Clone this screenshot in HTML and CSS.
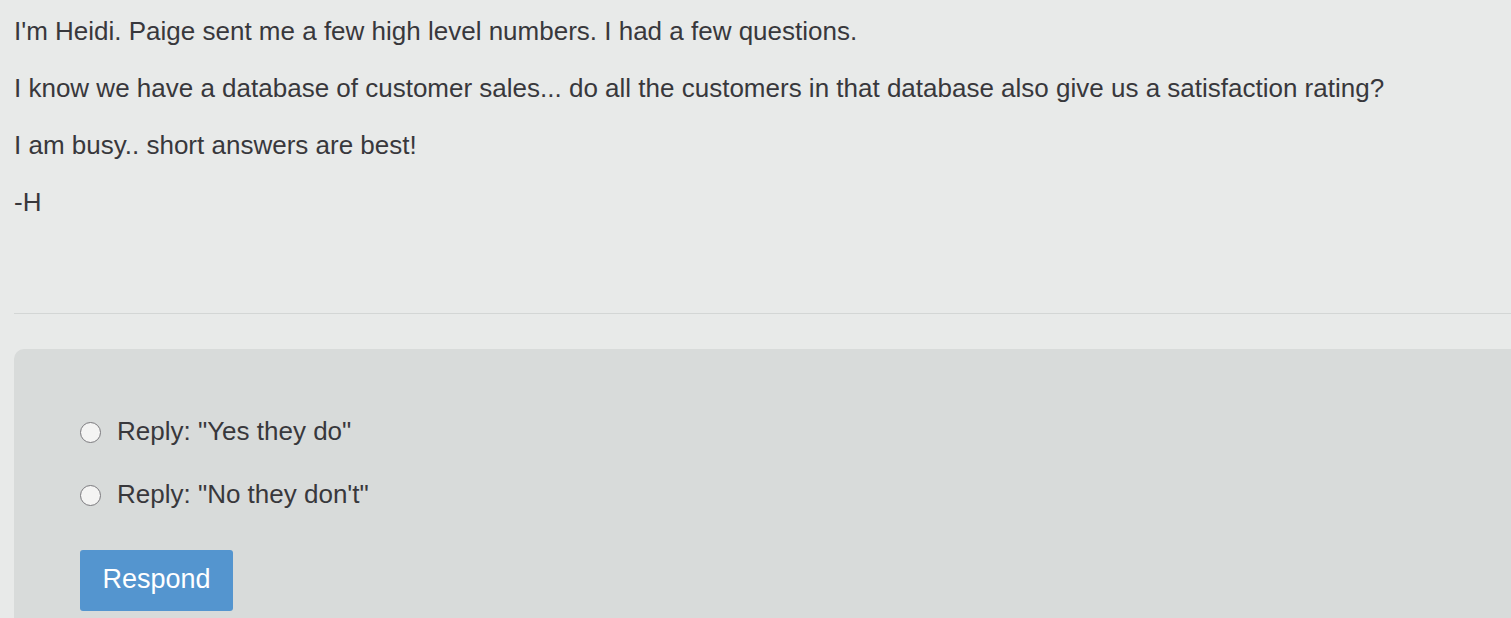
FILE: index.html
```html
<!DOCTYPE html>
<html>
<head>
<meta charset="utf-8">
<link rel="stylesheet" href="styles.css">
</head>
<body>
<div class="message">
  <p>I'm Heidi. Paige sent me a few high level numbers. I had a few questions.</p>
  <p>I know we have a database of customer sales... do all the customers in that database also give us a satisfaction rating?</p>
  <p>I am busy.. short answers are best!</p>
  <p>-H</p>
</div>
<hr class="divider">
<form class="panel">
  <label class="option"><span class="radio"></span><span>Reply: "Yes they do"</span></label>
  <label class="option"><span class="radio"></span><span>Reply: "No they don't"</span></label>
  <button type="button" class="respond">Respond</button>
</form>
</body>
</html>
```
FILE: styles.css
```css
html {
  margin: 0;
  height: 100%;
  background: #e8eae9;
}
body {
  margin: 0;
  height: 100%;
  box-sizing: border-box;
  padding-left: 14px;
  display: flex;
  flex-direction: column;
  overflow: hidden;
  font-family: "Liberation Sans", Arial, sans-serif;
  color: #38383c;
}
.message {
  flex-shrink: 0;
  padding-top: 17px;
}
.message p {
  margin: 0 0 28px 0;
  font-size: 26px;
  line-height: 29px;
}
.divider {
  flex-shrink: 0;
  width: 100%;
  border: 0;
  border-top: 1px solid #d3d6d5;
  margin: 68px 0 0 0;
}
.panel {
  flex: 1;
  margin: 35px 0 0 0;
  background: #d8dbda;
  border-top-left-radius: 10px;
  padding: 67px 0 0 66px;
  display: flex;
  flex-direction: column;
  align-items: flex-start;
}
.option {
  display: flex;
  align-items: center;
  gap: 16px;
  font-size: 26px;
  line-height: 30px;
  margin-bottom: 33px;
}
.radio {
  width: 21px;
  height: 21px;
  border: 1.5px solid #7b7a7e;
  border-radius: 50%;
  background: #f4f4f3;
  box-sizing: border-box;
  margin-top: 2px;
}
.respond {
  margin-top: 8px;
  width: 153px;
  height: 61px;
  border: 0;
  border-radius: 3px;
  background: #5495cf;
  color: #ffffff;
  font-family: "Liberation Sans", Arial, sans-serif;
  font-size: 27px;
  padding: 0 0 2px 0;
}
```
